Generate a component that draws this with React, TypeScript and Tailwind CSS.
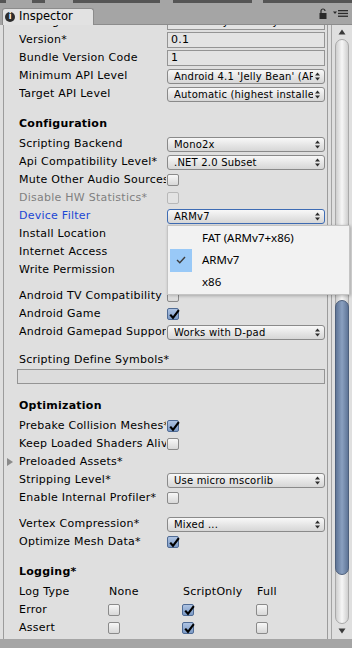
import React from 'react';

const CheckBox = ({ on = false, dim = false }: { on?: boolean; dim?: boolean }) => (
  <div
    className={`relative w-[12px] h-[12px] rounded-[2px] border shrink-0 ${
      dim
        ? 'border-[#b8b8b8] bg-[#e3e3e3]'
        : on
        ? 'border-[#4f6b95] bg-gradient-to-b from-[#aec3e2] to-[#7d9bc6]'
        : 'border-[#8a8a8a] bg-gradient-to-b from-[#f7f7f7] to-[#d8d8d8]'
    }`}
  >
    {on && (
      <svg viewBox="0 0 12 12" className="absolute left-0 top-0 w-[12px] h-[12px] overflow-visible">
        <path d="M2.2 5.6 L5 8.8 L10.8 1.2" fill="none" stroke="#000" strokeWidth="2.2" />
      </svg>
    )}
  </div>
);

const Arrows = () => (
  <svg width="5" height="9" viewBox="0 0 5 9" className="shrink-0">
    <path d="M0 3.5 L2.5 0.5 L5 3.5 Z" fill="#2c2c2c" />
    <path d="M0 5.5 L2.5 8.5 L5 5.5 Z" fill="#2c2c2c" />
  </svg>
);

const Popup = ({ value, focus = false }: { value: string; focus?: boolean }) => (
  <div
    className={`w-[158px] h-[15px] rounded-[3px] border flex items-center pl-[6px] pr-[4px] text-[10px] tracking-[0.2px] bg-gradient-to-b from-[#f8f8f8] to-[#d6d6d6] ${
      focus ? 'border-[#3e6cb4]' : 'border-[#8a8a8a]'
    }`}
  >
    <span className="flex-1 overflow-hidden whitespace-nowrap mr-[2px]">{value}</span>
    <Arrows />
  </div>
);

const TextField = ({ value }: { value: string }) => (
  <div className="w-[158px] h-[16px] border border-[#949494] bg-[#e3e3e3] flex items-center pl-[3px] overflow-hidden whitespace-nowrap">
    {value}
  </div>
);

const Row = ({
  label,
  children,
  className = '',
  labelClass = '',
}: {
  label: string;
  children?: React.ReactNode;
  className?: string;
  labelClass?: string;
}) => (
  <div className={`h-[18px] flex items-center ${className}`}>
    <div className="w-[148px] shrink-0">
      <div className={`w-[147px] overflow-hidden whitespace-nowrap ${labelClass}`}>{label}</div>
    </div>
    {children}
  </div>
);

const Header = ({ text, className = '' }: { text: string; className?: string }) => (
  <div className={`h-[18px] flex items-center font-bold ${className}`}>{text}</div>
);

const App = () => {
  const logRows = ['Error', 'Assert'];

  return (
    <div className="w-[352px] h-[648px] bg-[#a5a5a5] overflow-hidden font-['DejaVu_Sans',sans-serif] text-[11px] tracking-[0.25px] text-black">
      {/* remnants of the panel above */}
      <div className="h-[3px] flex">
        <div className="w-[6px] bg-[#555]" />
        <div className="w-[26px]" />
        <div className="w-[13px] bg-[#555]" />
        <div className="w-[28px]" />
        <div className="w-[87px] bg-[#555]" />
        <div className="w-[13px]" />
        <div className="w-[79px] bg-[#555]" />
        <div className="w-[11px]" />
        <div className="flex-1 bg-[#555]" />
      </div>

      {/* tab strip */}
      <div className="h-[22px] flex items-end">
        <div className="ml-[2px] w-[92px] h-[17px] bg-[#e2e2e2] border border-b-0 border-[#8c8c8c] rounded-t-[3px] flex items-center pl-[2px] gap-[4px]">
          <div className="w-[10px] h-[10px] rounded-full bg-[#2d2d2d] flex items-center justify-center text-white text-[8px] font-bold leading-none tracking-normal">
            i
          </div>
          <span className="text-[11.5px] leading-none tracking-normal">Inspector</span>
        </div>
        <div className="flex-1 h-full border-b border-[#8c8c8c] flex items-center justify-end pr-[4px] gap-[6px]">
          <svg width="8" height="11" viewBox="0 0 8 11">
            <path d="M2 5 V3 a2 2 0 0 1 4 0" fill="none" stroke="#2a2a2a" strokeWidth="1.2" />
            <rect x="0.5" y="5" width="7" height="6" fill="#2a2a2a" />
          </svg>
          <svg width="15" height="7" viewBox="0 0 15 7">
            <path d="M0 1.5 L4 1.5 L2 4 Z" fill="#2a2a2a" />
            <rect x="5" y="0" width="10" height="1.3" fill="#2a2a2a" />
            <rect x="5" y="2.8" width="10" height="1.3" fill="#2a2a2a" />
            <rect x="5" y="5.6" width="10" height="1.3" fill="#2a2a2a" />
          </svg>
        </div>
      </div>

      {/* panel */}
      <div className="relative h-[614px] flex bg-[#dfdfdf]">
        <div className="w-[3px] shrink-0" />
        <div className="w-[325px] border-l border-r border-[#9c9c9c] pl-[15px] overflow-hidden">
          <div className="-mt-[12px]">
            <Row label="Package Name">
              <TextField value="com.Unity3D.UnityChanFirstTest" />
            </Row>
            <Row label="Version*">
              <TextField value="0.1" />
            </Row>
            <Row label="Bundle Version Code">
              <TextField value="1" />
            </Row>
            <Row label="Minimum API Level">
              <Popup value="Android 4.1 'Jelly Bean' (API level 16)" />
            </Row>
            <Row label="Target API Level">
              <Popup value="Automatic (highest installed)" />
            </Row>

            <Header text="Configuration" className="mt-[12px]" />
            <div className="mt-[2px]">
              <Row label="Scripting Backend">
                <Popup value="Mono2x" />
              </Row>
              <Row label="Api Compatibility Level*">
                <Popup value=".NET 2.0 Subset" />
              </Row>
              <Row label="Mute Other Audio Sources">
                <CheckBox />
              </Row>
              <Row label="Disable HW Statistics*" labelClass="text-[#7f7f7f]">
                <CheckBox dim />
              </Row>
              <Row label="Device Filter" labelClass="text-[#1b47d4]">
                <Popup value="ARMv7" focus />
              </Row>
              <Row label="Install Location" />
              <Row label="Internet Access" />
              <Row label="Write Permission" />
            </div>

            <div className="mt-[8px]">
              <Row label="Android TV Compatibility">
                <CheckBox />
              </Row>
              <Row label="Android Game">
                <CheckBox on />
              </Row>
              <Row label="Android Gamepad Support Level">
                <Popup value="Works with D-pad" />
              </Row>
            </div>

            <div className="mt-[10px] h-[18px] flex items-center">Scripting Define Symbols*</div>
            <div className="w-[308px] -ml-[2px] h-[15px] border border-[#949494] bg-[#dcdcdc]" />

            <Header text="Optimization" className="mt-[13px]" />
            <div className="mt-[2px]">
              <Row label="Prebake Collision Meshes*">
                <CheckBox on />
              </Row>
              <Row label="Keep Loaded Shaders Alive*">
                <CheckBox />
              </Row>
              <div className="relative h-[18px] flex items-center">
                <svg width="6" height="8" viewBox="0 0 6 8" className="absolute -left-[12px] top-[5px]">
                  <path d="M0 0 L6 4 L0 8 Z" fill="#8a8a8a" />
                </svg>
                Preloaded Assets*
              </div>
              <Row label="Stripping Level*">
                <Popup value="Use micro mscorlib" />
              </Row>
              <Row label="Enable Internal Profiler*">
                <CheckBox />
              </Row>
            </div>

            <div className="mt-[8px]">
              <Row label="Vertex Compression*">
                <Popup value="Mixed ..." />
              </Row>
              <Row label="Optimize Mesh Data*">
                <CheckBox on />
              </Row>
            </div>

            <Header text="Logging*" className="mt-[12px]" />
            <div className="mt-[2px] grid grid-cols-[89px_74px_74px_74px]">
              <div className="h-[18px] flex items-center">Log Type</div>
              <div className="h-[18px] flex items-center pl-[1px]">None</div>
              <div className="h-[18px] flex items-center pl-[1px]">ScriptOnly</div>
              <div className="h-[18px] flex items-center pl-[1px]">Full</div>
              {logRows.map((r) => (
                <React.Fragment key={r}>
                  <div className="h-[18px] flex items-center">{r}</div>
                  <div className="h-[18px] flex items-center">
                    <CheckBox />
                  </div>
                  <div className="h-[18px] flex items-center">
                    <CheckBox on />
                  </div>
                  <div className="h-[18px] flex items-center">
                    <CheckBox />
                  </div>
                </React.Fragment>
              ))}
            </div>
          </div>
        </div>

        {/* scrollbar */}
        <div className="w-[3px] shrink-0" />
        <div className="flex-1 border-l border-[#a4a4a4] flex flex-col items-center pt-[4px] pb-[5px]">
          <svg width="8" height="6" viewBox="0 0 8 6">
            <path d="M0.5 5.5 L4 0.5 L7.5 5.5 Z" fill="#3a3a3a" />
          </svg>
          <div className="mt-[4px] w-[14px] flex-1 rounded-[7px] border border-[#a9a9a9] bg-gradient-to-r from-[#cfcfcf] via-[#f6f6f6] to-[#cfcfcf] flex flex-col pt-[260px] pb-[48px]">
            <div className="flex-1 -mx-[1px] rounded-[7px] border border-[#4d5f7b] bg-gradient-to-r from-[#5f7597] via-[#8aa0c0] to-[#5f7597]" />
          </div>
          <svg width="8" height="6" viewBox="0 0 8 6" className="mt-[4px]">
            <path d="M0.5 0.5 L4 5.5 L7.5 0.5 Z" fill="#3a3a3a" />
          </svg>
        </div>

        {/* open dropdown menu */}
        <div className="absolute left-[167px] top-[200px] w-[183px] h-[70px] bg-[#f2f2f2] border border-[#c4c4c4] shadow-[1px_1px_3px_rgba(0,0,0,0.25)] pt-[1px] font-['Noto_Sans',sans-serif] text-[11.5px] tracking-normal">
          <div className="h-[22px] flex items-center">
            <div className="w-[22px] ml-[2px]" />
            <span className="ml-[10px]">FAT (ARMv7+x86)</span>
          </div>
          <div className="h-[22px] flex items-center">
            <div className="w-[22px] h-[23px] ml-[2px] bg-[#99c9f7] flex items-center justify-center">
              <svg width="10" height="8" viewBox="0 0 10 8">
                <path d="M1 4 L3.8 6.8 L9 1" fill="none" stroke="#3c3c3c" strokeWidth="1.4" />
              </svg>
            </div>
            <span className="ml-[10px]">ARMv7</span>
          </div>
          <div className="h-[22px] flex items-center">
            <div className="w-[22px] ml-[2px]" />
            <span className="ml-[10px]">x86</span>
          </div>
        </div>
      </div>
    </div>
  );
};

export default App;
